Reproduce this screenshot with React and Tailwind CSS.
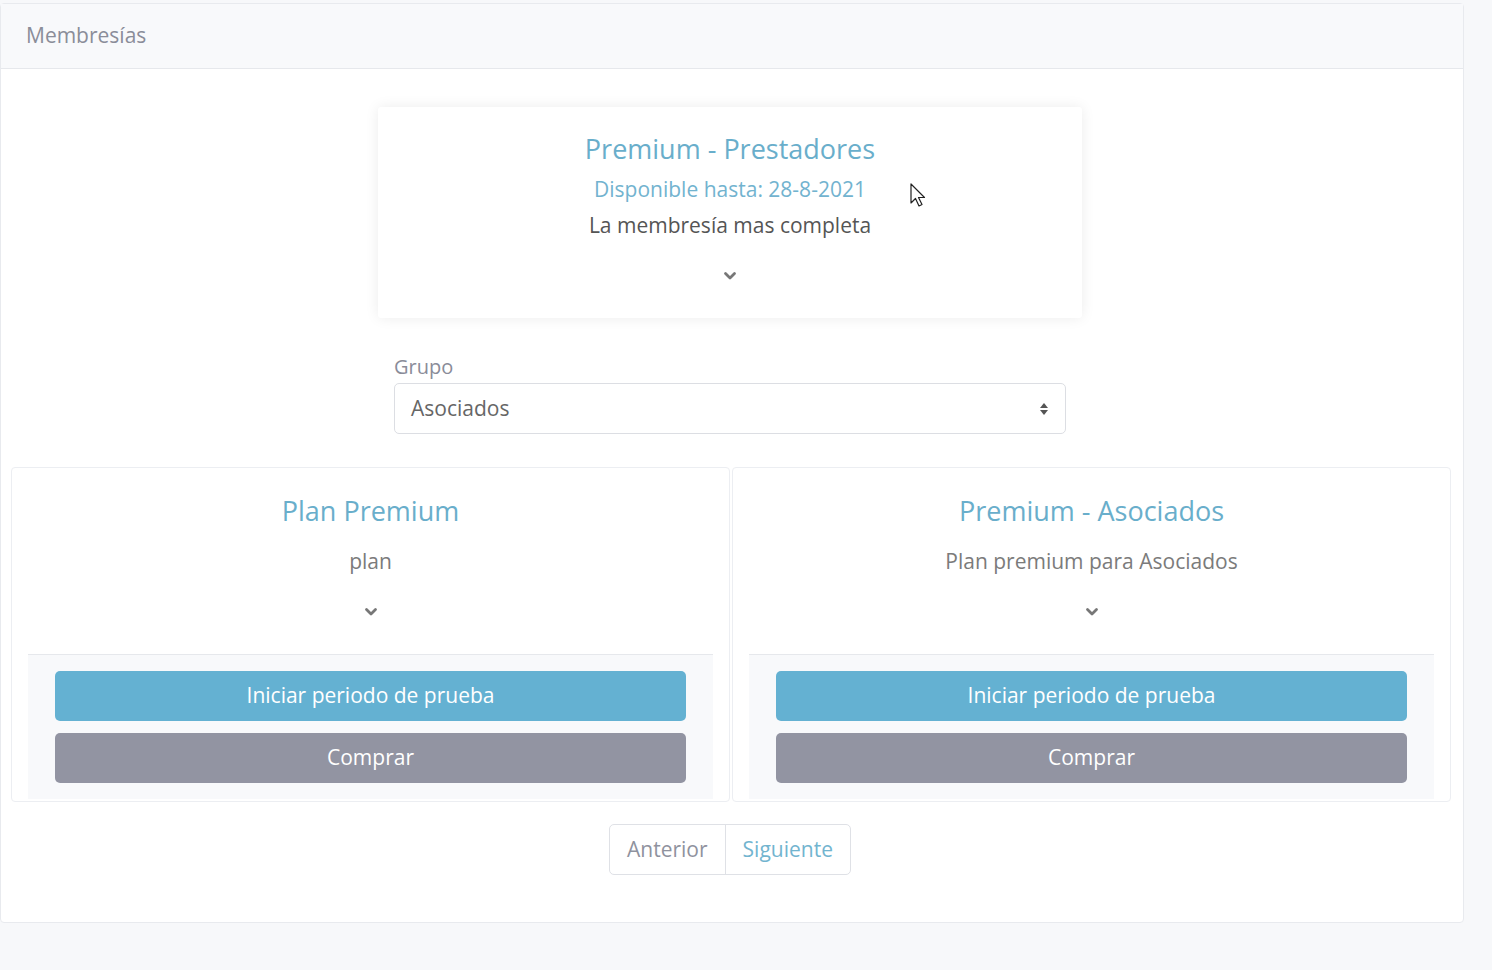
import React from 'react';

const Chevron = () => (
  <svg width="14" height="10" viewBox="0 0 14 10" className="mx-auto">
    <polyline points="2.5,2.5 7,7 11.5,2.5" fill="none" stroke="#777" strokeWidth="2.8" strokeLinecap="round" strokeLinejoin="round" />
  </svg>
);

function PlanCard({ title, desc }) {
  return (
    <div className="flex-1 bg-white border border-[#eceef2] rounded-[4px] px-[16px] pb-[2px] text-center">
      <div className="pt-[25px] text-[27px] leading-[36px] text-[#69aecb]">{title}</div>
      <div className="mt-[17px] text-[21px] leading-[30px] text-[#7b7b7b]">{desc}</div>
      <div className="mt-[31px]"><Chevron /></div>
      <div className="mt-[37px] bg-[#f8f9fb] border-t border-[#e6e8ec] px-[27px] pt-[16px] pb-[16px] flex flex-col gap-[12px]">
        <button className="h-[50px] w-full rounded-[5px] bg-[#64b1d2] text-white text-[21px]">Iniciar periodo de prueba</button>
        <button className="h-[50px] w-full rounded-[5px] bg-[#9294a2] text-white text-[21px]">Comprar</button>
      </div>
    </div>
  );
}

export default function App() {
  return (
    <div className="min-h-screen bg-[#f7f8fa] font-['Open_Sans',sans-serif] pt-[3px] relative">
      <div className="w-[1464px] bg-white border border-[#e8eaee] rounded-[4px]">
        {/* header */}
        <div className="h-[65px] bg-[#f8f9fb] border-b border-[#e6e8ec] px-[25px] flex items-center text-[21px] text-[#8a8d99]">
          Membresías
        </div>

        <div className="pt-[38px] pb-[47px] pl-[10px] pr-[14px]">
          {/* current membership */}
          <div className="w-[704px] mx-auto bg-white rounded-[3px] shadow-[0_0_14px_rgba(0,0,0,0.08)] text-center pt-[24px] pb-[37px]">
            <div className="text-[27px] leading-[36px] text-[#69aecb]">Premium - Prestadores</div>
            <div className="mt-[4px] text-[21px] leading-[36px] text-[#72b3cf]">Disponible hasta: 28-8-2021</div>
            <div className="text-[21px] leading-[36px] text-[#555]">La membresía mas completa</div>
            <div className="mt-[28px]"><Chevron /></div>
          </div>

          {/* grupo select */}
          <div className="w-[672px] mx-auto mt-[35px]">
            <div className="text-[20px] leading-[28px] text-[#8a8c99]">Grupo</div>
            <div className="mt-[2px] h-[51px] border border-[#dcdee3] rounded-[5px] flex items-center justify-between pl-[16px] pr-[16px]">
              <span className="text-[21px] text-[#666]">Asociados</span>
              <svg width="10" height="16" viewBox="0 0 10 16">
                <polygon points="5,2 9,7 1,7" fill="#555" />
                <polygon points="1,9 9,9 5,14" fill="#555" />
              </svg>
            </div>
          </div>

          {/* plans */}
          <div className="mt-[33px] flex gap-[2px] w-[1440px]">
            <PlanCard title="Plan Premium" desc="plan" />
            <PlanCard title="Premium - Asociados" desc="Plan premium para Asociados" />
          </div>

          {/* pagination */}
          <div className="mt-[22px] flex justify-center">
            <div className="flex h-[51px] border border-[#dfe1e6] rounded-[5px] text-[21px]">
              <button className="px-[17px] text-[#8f929e] border-r border-[#dfe1e6]">Anterior</button>
              <button className="px-[17px] text-[#72b4cf]">Siguiente</button>
            </div>
          </div>
        </div>
      </div>

      {/* mouse cursor */}
      <svg className="absolute left-[910px] top-[183px]" width="18" height="26" viewBox="0 0 18 26">
        <path d="M1 1 L1 20 L5.5 15.5 L9 23 L12 21.5 L8.5 14.5 L14.5 14.5 Z" fill="white" stroke="#222" strokeWidth="1.2" strokeLinejoin="round" />
      </svg>
    </div>
  );
}
